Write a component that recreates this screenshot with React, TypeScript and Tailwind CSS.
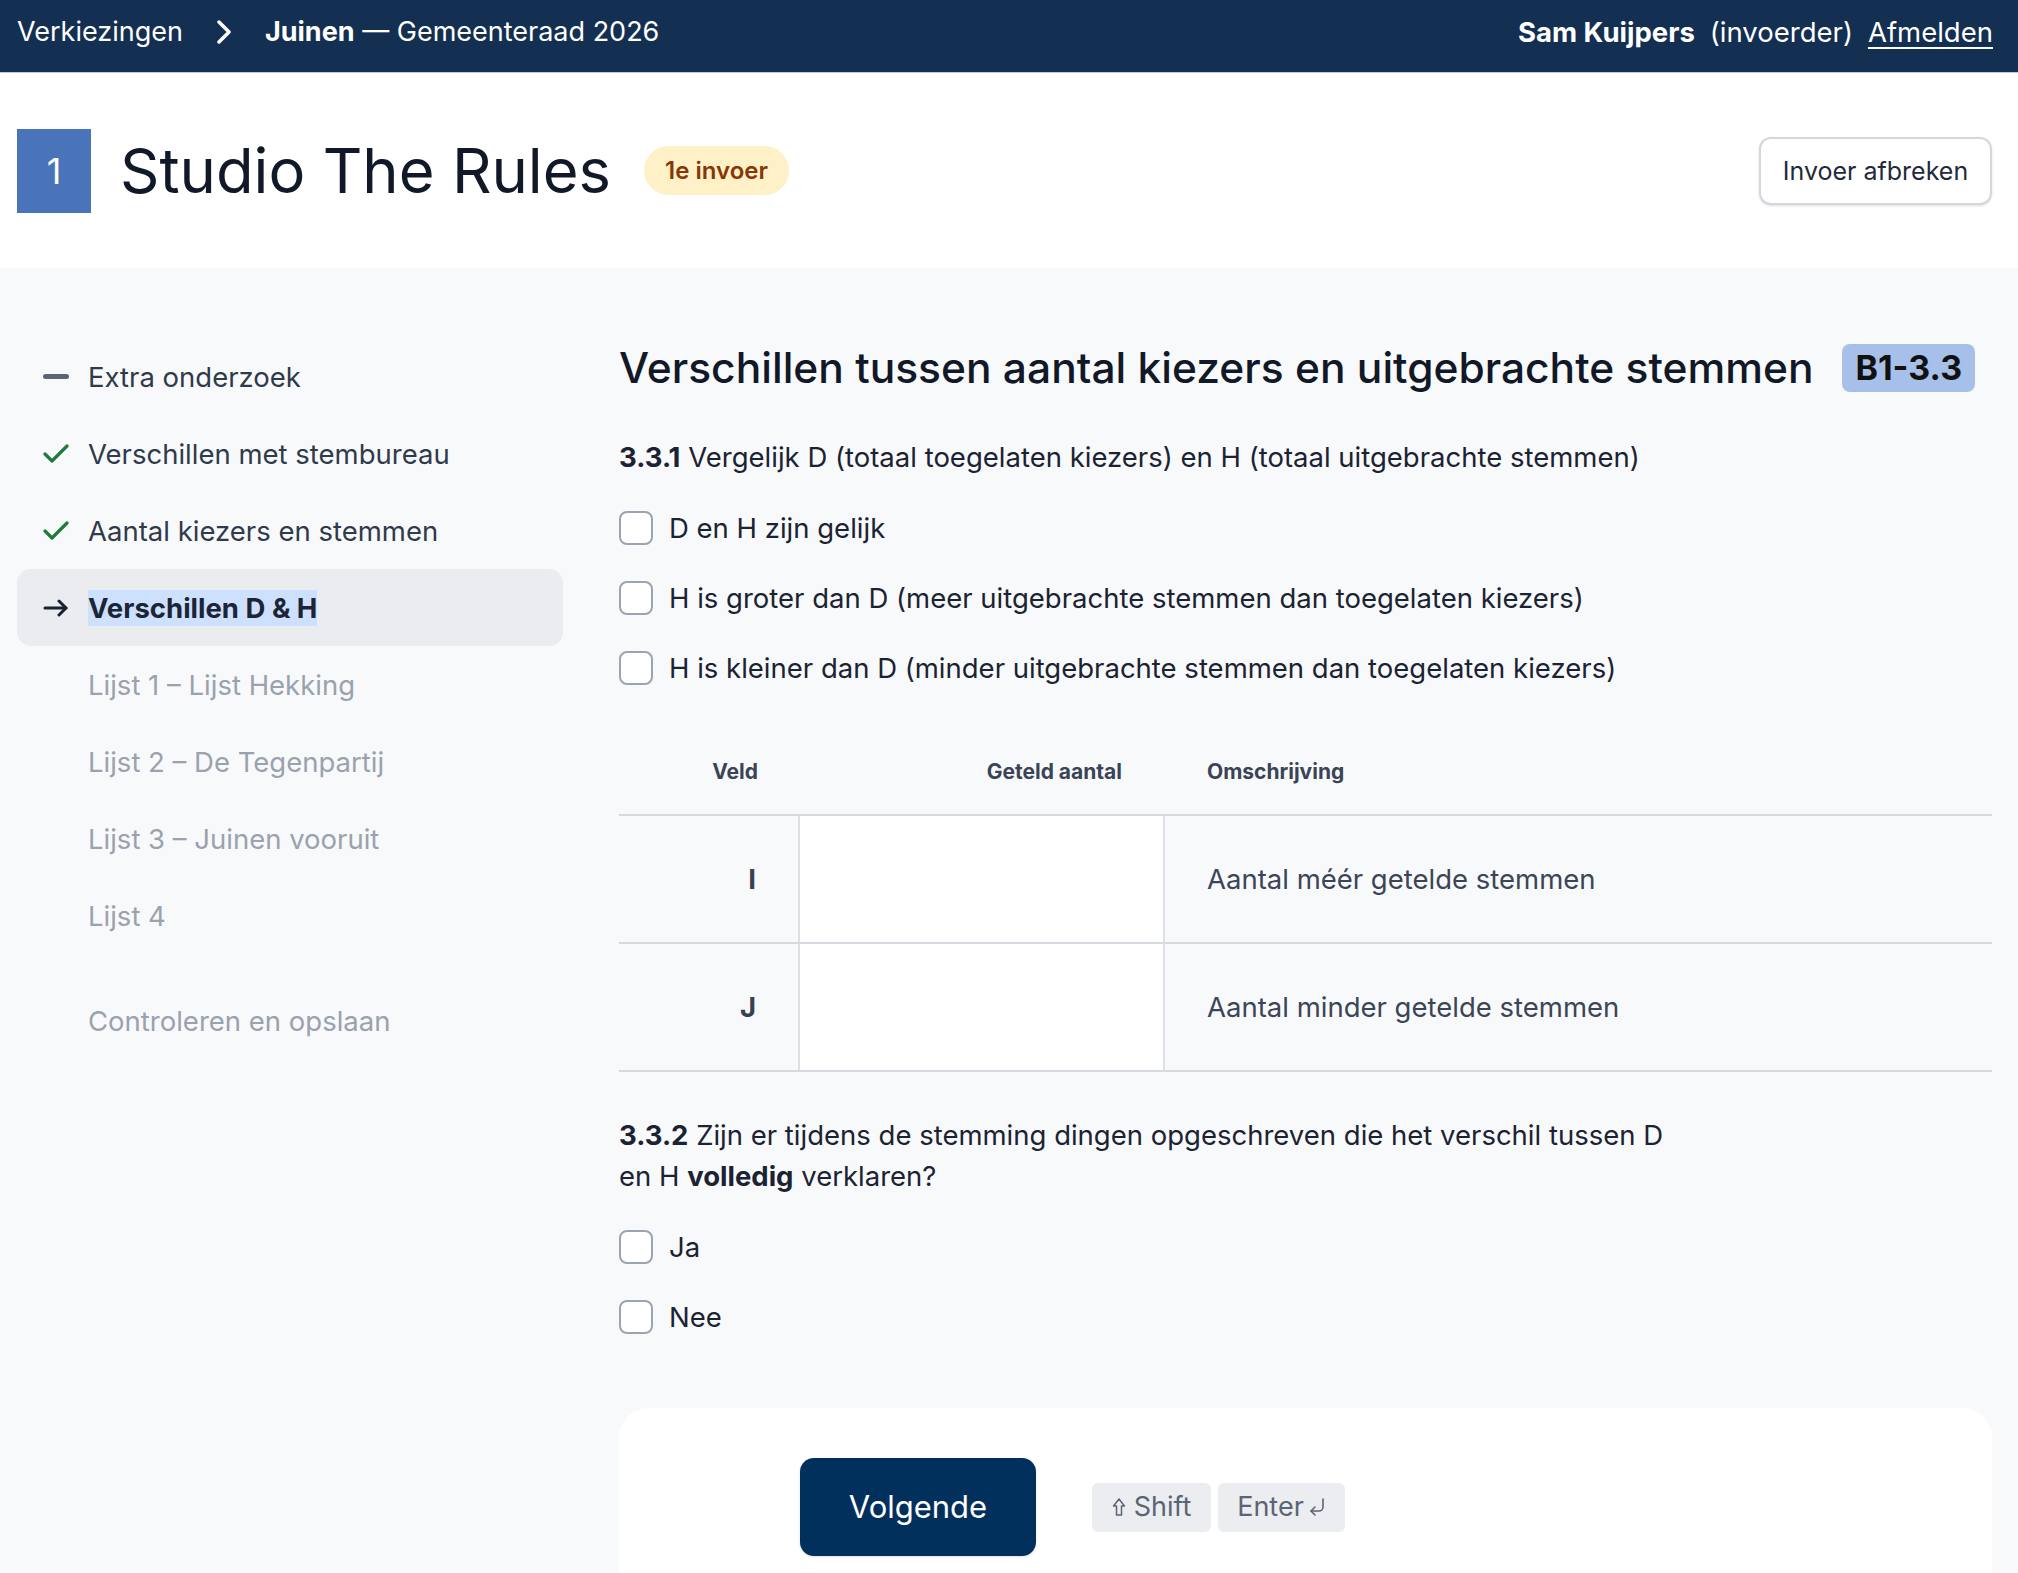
import React from "react";

function Chevron() {
  return (
    <svg width="16" height="24" viewBox="0 0 16 24" className="mx-[33px]" fill="none">
      <polyline points="3,2 13,12 3,22" stroke="white" strokeWidth="3.5" strokeLinecap="round" strokeLinejoin="round" />
    </svg>
  );
}

function Check() {
  return (
    <svg width="26" height="19" viewBox="0 0 26 19" fill="none">
      <polyline points="2,10 9,17 24,2" stroke="#1e7b3c" strokeWidth="3.2" strokeLinecap="round" strokeLinejoin="round" />
    </svg>
  );
}

function Arrow() {
  return (
    <svg width="26" height="18" viewBox="0 0 26 18" fill="none">
      <line x1="2" y1="9" x2="23" y2="9" stroke="#182132" strokeWidth="3" strokeLinecap="round" />
      <polyline points="16,2 23,9 16,16" stroke="#182132" strokeWidth="3" strokeLinecap="round" strokeLinejoin="round" />
    </svg>
  );
}

function Dash() {
  return <div className="w-[26px] h-[5px] rounded-full bg-[#5a6576]" />;
}

function Checkbox() {
  return <div className="w-[34px] h-[34px] rounded-[8px] border-2 border-[#9ba4b2] bg-white shrink-0" />;
}

function Option({ label }: { label: string }) {
  return (
    <div className="flex items-center gap-[16px] h-[40px]">
      <Checkbox />
      <span className="text-[#1b2333]">{label}</span>
    </div>
  );
}

function SideItem({
  icon,
  label,
  tone,
}: {
  icon?: React.ReactNode;
  label: string;
  tone: "done" | "muted" | "active" | "normal";
}) {
  const active = tone === "active";
  return (
    <div
      className={
        "flex items-center h-[77px] pl-[26px] rounded-[14px] " + (active ? "bg-[#ebecf0]" : "")
      }
    >
      <div className="w-[26px] flex items-center justify-center mr-[19px]">{icon}</div>
      {active ? (
        <span className="font-bold text-[#1c2536] bg-[#cde0fd] leading-[36px]">{label}</span>
      ) : (
        <span className={tone === "muted" ? "text-[#9aa2ae]" : "text-[#2f3a4b]"}>{label}</span>
      )}
    </div>
  );
}

function ShiftGlyph() {
  return (
    <svg width="14" height="20" viewBox="0 0 14 20" fill="none">
      <path d="M7 2 L12.5 9 H9.5 V18 H4.5 V9 H1.5 Z" stroke="#5b6474" strokeWidth="1.5" strokeLinejoin="round" />
    </svg>
  );
}

function EnterGlyph() {
  return (
    <svg width="18" height="22" viewBox="0 0 18 22" fill="none">
      <path d="M15 3 V11 a4 4 0 0 1 -4 4 H3" stroke="#5b6474" strokeWidth="1.6" strokeLinecap="round" />
      <polyline points="7,11 3,15 7,19" stroke="#5b6474" strokeWidth="1.6" strokeLinecap="round" strokeLinejoin="round" />
    </svg>
  );
}

export default function App() {
  return (
    <div className="min-h-screen bg-[#f8f9fb] font-['Inter',sans-serif] text-[27.5px] leading-[40px]">
      {/* Top navigation */}
      <nav className="h-[73px] bg-[#132f51] border-b border-[#b9cbe0] flex items-center justify-between pl-[17px] pr-[25px] pb-[8px] text-white text-[27px]">
        <div className="flex items-center">
          <span>Verkiezingen</span>
          <Chevron />
          <span className="font-bold">Juinen</span>
          <span>&nbsp;— Gemeenteraad 2026</span>
        </div>
        <div className="flex items-center gap-[15px] text-[27.5px]">
          <span className="font-bold">Sam Kuijpers</span>
          <span>(invoerder)</span>
          <a className="underline underline-offset-[5px] decoration-2">Afmelden</a>
        </div>
      </nav>

      {/* Header */}
      <header className="bg-white h-[195px] flex items-center justify-between pl-[17px] pr-[26px]">
        <div className="flex items-center">
          <div className="w-[74px] h-[84px] bg-[#4a74ba] flex items-center justify-center text-white text-[36px]">
            1
          </div>
          <h1 className="ml-[29px] text-[61.5px] leading-[72px] text-[#111827]">Studio The Rules</h1>
          <span className="ml-[33px] h-[49px] px-[21px] rounded-full bg-[#fef1c7] text-[#873608] text-[24px] font-semibold flex items-center">
            1e invoer
          </span>
        </div>
        <button className="w-[233px] h-[68px] rounded-[12px] border-2 border-[#d3d8df] bg-white text-[25px] text-[#1f2a3b] shadow-sm">
          Invoer afbreken
        </button>
      </header>

      <div className="flex">
        {/* Sidebar */}
        <aside className="w-[619px] shrink-0 pl-[17px] pr-[56px] pt-[70px]">
          <SideItem icon={<Dash />} label="Extra onderzoek" tone="normal" />
          <SideItem icon={<Check />} label="Verschillen met stembureau" tone="normal" />
          <SideItem icon={<Check />} label="Aantal kiezers en stemmen" tone="normal" />
          <SideItem icon={<Arrow />} label="Verschillen D & H" tone="active" />
          <SideItem label="Lijst 1 – Lijst Hekking" tone="muted" />
          <SideItem label="Lijst 2 – De Tegenpartij" tone="muted" />
          <SideItem label="Lijst 3 – Juinen vooruit" tone="muted" />
          <SideItem label="Lijst 4" tone="muted" />
          <div className="mt-[28px]">
            <SideItem label="Controleren en opslaan" tone="muted" />
          </div>
        </aside>

        {/* Main */}
        <main className="flex-1 pr-[26px] pt-[76px]">
          <div className="flex items-center gap-[29px] h-[48px]">
            <h2 className="text-[42.5px] font-medium text-[#111827] leading-[48px]">
              Verschillen tussen aantal kiezers en uitgebrachte stemmen
            </h2>
            <span className="h-[48px] px-[13px] rounded-[8px] bg-[#a6c0e9] text-[#111111] text-[34px] font-bold flex items-center">
              B1-3.3
            </span>
          </div>

          <p className="mt-[45px] text-[#1b2333]">
            <span className="font-bold">3.3.1</span> Vergelijk D (totaal toegelaten kiezers) en H (totaal uitgebrachte stemmen)
          </p>

          <div className="mt-[31px] flex flex-col gap-[30px]">
            <Option label="D en H zijn gelijk" />
            <Option label="H is groter dan D (meer uitgebrachte stemmen dan toegelaten kiezers)" />
            <Option label="H is kleiner dan D (minder uitgebrachte stemmen dan toegelaten kiezers)" />
          </div>

          {/* Table */}
          <div className="mt-[42px]">
            <div className="grid grid-cols-[181px_365px_1fr] h-[84px] items-center text-[21px] font-bold text-[#3a4456]">
              <div className="text-right pr-[42px]">Veld</div>
              <div className="text-right pr-[43px]">Geteld aantal</div>
              <div className="pl-[42px]">Omschrijving</div>
            </div>
            <div className="border-t-2 border-[#d5d9e0]">
              {[
                { f: "I", d: "Aantal méér getelde stemmen" },
                { f: "J", d: "Aantal minder getelde stemmen" },
              ].map((r) => (
                <div key={r.f} className="grid grid-cols-[181px_365px_1fr] h-[128px] border-b-2 border-[#d5d9e0]">
                  <div className="flex items-center justify-end pr-[42px] font-bold text-[#354052] border-r-2 border-[#dde1e7]">
                    {r.f}
                  </div>
                  <div className="bg-white border-r-2 border-[#dde1e7]" />
                  <div className="flex items-center pl-[42px] text-[#3b4557]">{r.d}</div>
                </div>
              ))}
            </div>
          </div>

          <div className="mt-[43px] leading-[41px] text-[#1b2333]">
            <div>
              <span className="font-bold">3.3.2</span>
              <span> Zijn er tijdens de stemming dingen opgeschreven die het verschil tussen D</span>
            </div>
            <div>
              <span>en H </span>
              <span className="font-bold">volledig</span>
              <span> verklaren?</span>
            </div>
          </div>

          <div className="mt-[30px] flex flex-col gap-[30px]">
            <Option label="Ja" />
            <Option label="Nee" />
          </div>

          {/* Bottom action card */}
          <div className="mt-[71px] bg-white rounded-t-[30px] pl-[181px] pt-[50px] pb-[60px] flex items-center">
            <button className="w-[236px] h-[98px] rounded-[14px] bg-[#02305d] text-white text-[31px] shadow-sm">
              Volgende
            </button>
            <div className="ml-[56px] flex items-center gap-[7px] text-[27px] text-[#5b6474]">
              <span className="w-[119px] h-[49px] rounded-[6px] bg-[#ebedf0] flex items-center justify-center gap-[8px]">
                <ShiftGlyph />
                Shift
              </span>
              <span className="w-[127px] h-[49px] rounded-[6px] bg-[#ebedf0] flex items-center justify-center gap-[4px]">
                Enter
                <EnterGlyph />
              </span>
            </div>
          </div>
        </main>
      </div>
    </div>
  );
}
